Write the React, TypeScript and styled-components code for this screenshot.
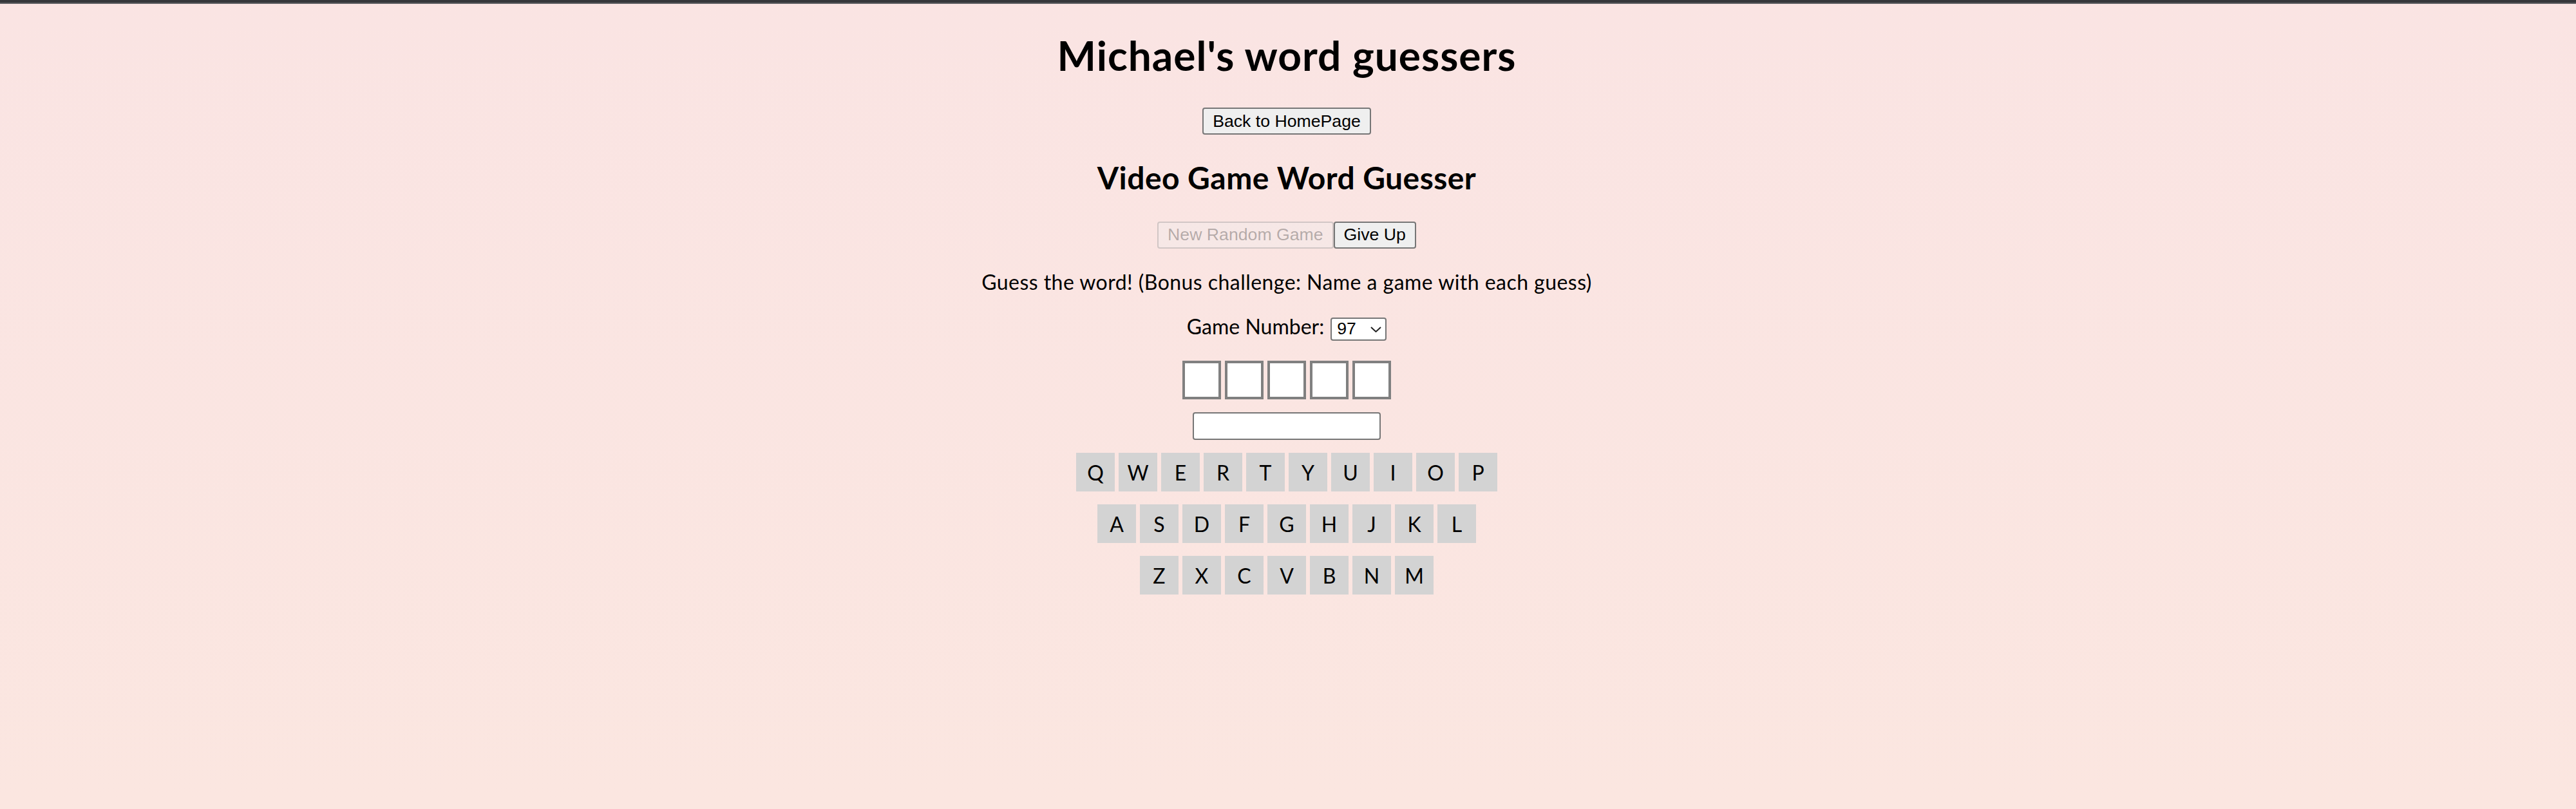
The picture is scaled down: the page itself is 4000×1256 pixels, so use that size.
import React from "react";
import styled, { createGlobalStyle } from "styled-components";

const GlobalStyle = createGlobalStyle`
  html, body {
    margin: 0;
    padding: 0;
  }
  body {
    font-family: Lato, "Open Sans", sans-serif;
    color: #000;
  }
`;

const Page = styled.div`
  min-height: 100vh;
  display: flex;
  flex-direction: column;
  background: linear-gradient(to bottom, #fae4e3, #fbe6e0);
`;

const TopBar = styled.div`
  height: 4px;
  background: #36373b;
  border-bottom: 2px solid #5c5c60;
`;

const Main = styled.main`
  display: flex;
  flex-direction: column;
  align-items: center;
  padding: 0 4px 0 0;
`;

const Title = styled.h1`
  margin: 41.5px 0 0;
  font-size: 64px;
  line-height: 76.8px;
  font-weight: 700;
  letter-spacing: 1px;
`;

const Subtitle = styled.h2`
  margin: 38px 0 0;
  font-size: 48px;
  line-height: 57.6px;
  font-weight: 700;
  letter-spacing: 0.45px;
`;

const NativeButton = styled.button<{ $top?: number }>`
  margin-top: ${(p) => p.$top ?? 0}px;
  font-family: "Liberation Sans", Arial, sans-serif;
  font-size: 26.67px;
  line-height: 30.67px;
  padding: 3.6px 14px;
  border: 2px solid #767676;
  border-radius: 4px;
  background: #efefef;
  color: #000;
  cursor: pointer;

  &:disabled {
    background: rgba(239, 239, 239, 0.3);
    color: rgba(16, 16, 16, 0.3);
    border-color: rgba(118, 118, 118, 0.3);
    cursor: default;
  }
`;

const ButtonGroup = styled.div`
  margin-top: 39.3px;
  display: flex;
`;

const Prompt = styled.p`
  margin: 33.9px 0 0;
  font-size: 32px;
  line-height: 38.4px;
  letter-spacing: 0.45px;
`;

const GameRow = styled.div`
  margin-top: 30.6px;
  display: flex;
  align-items: baseline;
  gap: 10px;
  font-size: 32px;
  line-height: 38.4px;
`;

const SelectWrap = styled.span`
  position: relative;
  display: inline-flex;
`;

const Select = styled.select`
  appearance: none;
  -webkit-appearance: none;
  box-sizing: border-box;
  width: 87px;
  height: 36px;
  padding: 0 40px 0 8px;
  font-family: "Liberation Sans", Arial, sans-serif;
  font-size: 26.67px;
  line-height: 30.67px;
  color: #000;
  background: #fff;
  border: 2px solid #767676;
  border-radius: 4px;
`;

const Chevron = styled.svg`
  position: absolute;
  right: 8px;
  top: 14px;
  width: 17px;
  height: 9px;
  pointer-events: none;
`;

const Boxes = styled.div`
  margin-top: 30.8px;
  display: flex;
  gap: 6px;
`;

const LetterBox = styled.div`
  box-sizing: border-box;
  width: 60px;
  height: 60px;
  border: 4px solid #808080;
  background: #fff;
`;

const GuessInput = styled.input`
  margin-top: 20px;
  box-sizing: border-box;
  width: 292px;
  height: 43px;
  border: 2px solid #767676;
  border-radius: 4px;
  background: #fff;
  font-family: "Liberation Sans", Arial, sans-serif;
  font-size: 26.67px;
  padding: 0 4px;
`;

const Keyboard = styled.div`
  margin-top: 20px;
  display: flex;
  flex-direction: column;
  align-items: center;
  gap: 20px;
`;

const KeyRow = styled.div`
  display: flex;
  gap: 6px;
`;

const Key = styled.button`
  box-sizing: border-box;
  width: 60px;
  height: 60px;
  padding: 3px 0 0;
  border: none;
  border-radius: 0;
  background: #d3d3d3;
  display: flex;
  align-items: center;
  justify-content: center;
  font-family: Lato, "Open Sans", sans-serif;
  font-size: 32px;
  line-height: 38.4px;
  color: #000;
  cursor: pointer;
`;

const rows = ["QWERTYUIOP", "ASDFGHJKL", "ZXCVBNM"];

export default function App() {
  return (
    <>
      <GlobalStyle />
      <Page>
        <TopBar />
        <Main>
          <Title>Michael's word guessers</Title>
          <NativeButton $top={42.7}>Back to HomePage</NativeButton>
          <Subtitle>Video Game Word Guesser</Subtitle>
          <ButtonGroup>
            <NativeButton disabled>New Random Game</NativeButton>
            <NativeButton>Give Up</NativeButton>
          </ButtonGroup>
          <Prompt>Guess the word! (Bonus challenge: Name a game with each guess)</Prompt>
          <GameRow>
            <span>Game Number:</span>
            <SelectWrap>
              <Select defaultValue="97">
                {Array.from({ length: 100 }, (_, i) => (
                  <option key={i + 1} value={String(i + 1)}>
                    {i + 1}
                  </option>
                ))}
              </Select>
              <Chevron viewBox="0 0 17 9">
                <path d="M1 1 L8.5 8 L16 1" fill="none" stroke="#222" strokeWidth="2" />
              </Chevron>
            </SelectWrap>
          </GameRow>
          <Boxes>
            {Array.from({ length: 5 }, (_, i) => (
              <LetterBox key={i} />
            ))}
          </Boxes>
          <GuessInput type="text" />
          <Keyboard>
            {rows.map((row) => (
              <KeyRow key={row}>
                {row.split("").map((ch) => (
                  <Key key={ch}>{ch}</Key>
                ))}
              </KeyRow>
            ))}
          </Keyboard>
        </Main>
      </Page>
    </>
  );
}
